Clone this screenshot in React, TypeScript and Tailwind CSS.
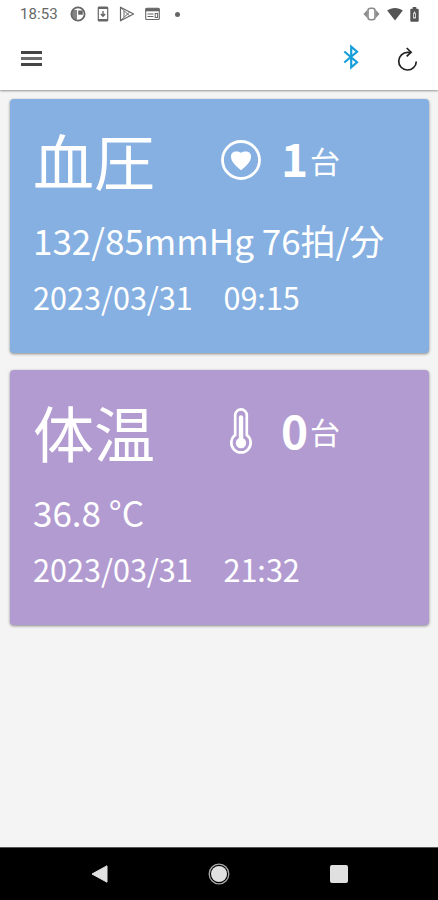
import React from 'react';

const HeartIcon = () => (
  <svg width="42" height="42" viewBox="0 0 42 42" fill="none">
    <circle cx="21" cy="21" r="18.5" stroke="white" strokeWidth="2.8" />
    <path
      d="M21 31.2C17 27.6 11 23.4 11 17.4C11 14 13.4 12.4 16 12.4C18 12.4 19.6 12.6 21 13.8C22.4 12.6 24 12.4 26 12.4C28.6 12.4 31 14 31 17.4C31 23.4 25 27.6 21 31.2Z"
      fill="white"
    />
  </svg>
);

const ThermometerIcon = () => (
  <svg width="42" height="48" viewBox="0 0 42 48" fill="none" stroke="white">
    <path d="M15.2 27V7.2a5.8 5.8 0 0 1 11.6 0V27a9.7 9.7 0 1 1-11.6 0Z" strokeWidth="2.7" />
    <path d="M21 9.5V35" strokeWidth="4.4" strokeLinecap="round" />
    <circle cx="21" cy="35" r="5.2" fill="white" stroke="none" />
  </svg>
);

const cards = [
  {
    title: '血圧',
    icon: <HeartIcon />,
    count: 1,
    value: '132/85mmHg 76拍/分',
    date: '2023/03/31\u300009:15',
    color: 'bg-[#85b0e1]',
  },
  {
    title: '体温',
    icon: <ThermometerIcon />,
    count: 0,
    value: '36.8 °C',
    date: '2023/03/31\u300021:32',
    color: 'bg-[#b29bd1]',
  },
];

const StatusBar = () => (
  <div className="flex h-7 items-center justify-between pl-5 pr-[19.5px] text-[#666]">
    <div className="flex items-center">
      <span className="w-[50px] pt-px font-['Roboto',sans-serif] text-[15px] leading-none tracking-[0.1px]">18:53</span>
      <svg width="16" height="16" viewBox="0 0 16 16">
        <circle cx="8" cy="8" r="6.6" fill="none" stroke="currentColor" strokeWidth="1.8" />
        <path d="M2 4h5v9.5H5L2 10Z" fill="currentColor" opacity="0.8" />
        <path d="M8.2 4.5h4.6v4.2H8.2Z" fill="currentColor" />
      </svg>
      <svg className="ml-[11px]" width="12" height="16" viewBox="0 0 12 16" fill="none" stroke="currentColor">
        <rect x="1.3" y="1" width="9.4" height="14" rx="1" strokeWidth="1.2" />
        <path d="M1.5 2h9M1.5 14h9" strokeWidth="1.8" />
        <path d="M6 5v5M3.8 8 6 10.3 8.2 8" strokeWidth="1.4" />
      </svg>
      <svg className="ml-[10px]" width="16" height="16" viewBox="0 0 16 16" fill="none" stroke="currentColor">
        <path d="M1.5 1.2v13.6L14.6 8Z" strokeWidth="1.2" strokeLinejoin="round" />
        <path d="m1.8 1.6 8.9 8.4M1.8 14.4 10.7 6M5 5v6" strokeWidth="1" />
      </svg>
      <svg className="ml-[10px]" width="15" height="14" viewBox="0 0 15 14" fill="none" stroke="currentColor">
        <rect x="0.7" y="1.3" width="13.6" height="11.2" rx="1" strokeWidth="1.1" />
        <path d="M0.7 2.8h13.6" strokeWidth="3" />
        <path d="M2.5 7h6M2.5 9.5h6" strokeWidth="1" />
        <rect x="10.2" y="6.5" width="2.4" height="4" strokeWidth="1" />
      </svg>
      <span className="ml-[15px] size-[5px] rounded-full bg-current" />
    </div>
    <div className="flex items-center">
      <svg width="17" height="14" viewBox="0 0 17 14" fill="none" stroke="currentColor" opacity="0.75">
        <rect x="5" y="1.3" width="7" height="11.4" rx="2.5" strokeWidth="1.6" />
        <path d="M4.5 2.8.4 7l4.1 4.2ZM12.5 2.8 16.6 7l-4.1 4.2Z" fill="currentColor" stroke="none" />
      </svg>
      <svg className="ml-[7px]" width="16" height="14" viewBox="0 0 16 14">
        <path d="M.2 3.6C4.5.1 11.5.1 15.8 3.6L8 13.6Z" fill="#555" />
      </svg>
      <svg className="ml-[7px]" width="9" height="15" viewBox="0 0 9 15">
        <path d="M2.7 0h3.6v1.8h1.5q.9 0 .9.9v11q0 1-.9 1H1.2q-.9 0-.9-1v-11q0-.9.9-.9h1.5Z" fill="#555" />
        <path d="M4.5 4 3 6.5v5h3v-5Z" fill="white" opacity="0.75" />
        <path d="M4.5 7v3" stroke="#555" strokeWidth="1" />
      </svg>
    </div>
  </div>
);

const Toolbar = () => (
  <div className="flex h-[62px] items-center justify-between pl-[21px] pr-[19.5px]">
    <div className="-mt-[2px] flex w-[21px] flex-col gap-[3px]">
      <span className="h-[3px] bg-[#454545]" />
      <span className="h-[3px] bg-[#6d6d6d]" />
      <span className="h-[3px] bg-[#454545]" />
    </div>
    <div className="flex items-center gap-[37px]">
      <svg className="-mt-[5px]" width="18" height="26" viewBox="0 0 18 26" fill="none" stroke="#169fd8" strokeWidth="2.2">
        <path d="M2.3 7.5 15 18.2l-5.8 5.2V2.6L15 7.8 2.3 18.5" />
      </svg>
      <svg width="22" height="24" viewBox="0 0 22 24" fill="none" stroke="#222" strokeWidth="1.7">
        <path d="M13.2 5.4H10.8A8.8 8.8 0 1 0 19.3 14.4" />
        <path d="m9.7 1 4.4 4.2-4.4 4.2" />
      </svg>
    </div>
  </div>
);

const NavBar = () => (
  <nav className="flex h-[53px] items-center justify-between border-t border-[#555] bg-black pl-[91px] pr-[90px]">
    <svg width="17" height="18" viewBox="0 0 17 18">
      <path d="M1 9 16 .8v16.4Z" fill="#e0e0e0" stroke="#e0e0e0" strokeLinejoin="round" />
    </svg>
    <svg width="22" height="22" viewBox="0 0 22 22">
      <circle cx="11" cy="11" r="9.8" fill="none" stroke="#aaa" strokeWidth="1.3" />
      <circle cx="11" cy="11" r="8" fill="#e0e0e0" />
    </svg>
    <span className="size-[18px] rounded-[2px] bg-[#e0e0e0]" />
  </nav>
);

export default function App() {
  return (
    <div className="flex h-[900px] w-[438px] flex-col overflow-hidden bg-[#f4f4f4] font-['Noto_Sans_CJK_JP',sans-serif]">
      <header className="z-10 h-[90px] shrink-0 bg-white shadow-[0_1px_2px_rgba(0,0,0,0.4)]">
        <StatusBar />
        <Toolbar />
      </header>
      <main className="flex flex-1 flex-col gap-[17px] px-[9.5px] pt-[8.5px]">
        {cards.map((card) => (
          <section
            key={card.title}
            className={`h-[254.5px] rounded-[4px] pl-[23.5px] pt-[31.5px] text-white shadow-[0_1px_3px_rgba(0,0,0,0.45)] ${card.color}`}
          >
            <div className="flex h-[60px] items-center">
              <h2 className="w-[187px] text-[61px] leading-[60px]">{card.title}</h2>
              <div className="w-[61px]">{card.icon}</div>
              <div className="flex items-end whitespace-nowrap">
                <span className="w-[29px] pb-[6px] text-[46px] font-bold leading-[60px]">{card.count}</span>
                <span className="pb-[18.5px] text-[30px] leading-[30px]">台</span>
              </div>
            </div>
            <p className="mt-[32px] whitespace-nowrap text-[35px] leading-9">{card.value}</p>
            <p className="mt-[23px] whitespace-nowrap text-[30.6px] leading-8">{card.date}</p>
          </section>
        ))}
      </main>
      <NavBar />
    </div>
  );
}
